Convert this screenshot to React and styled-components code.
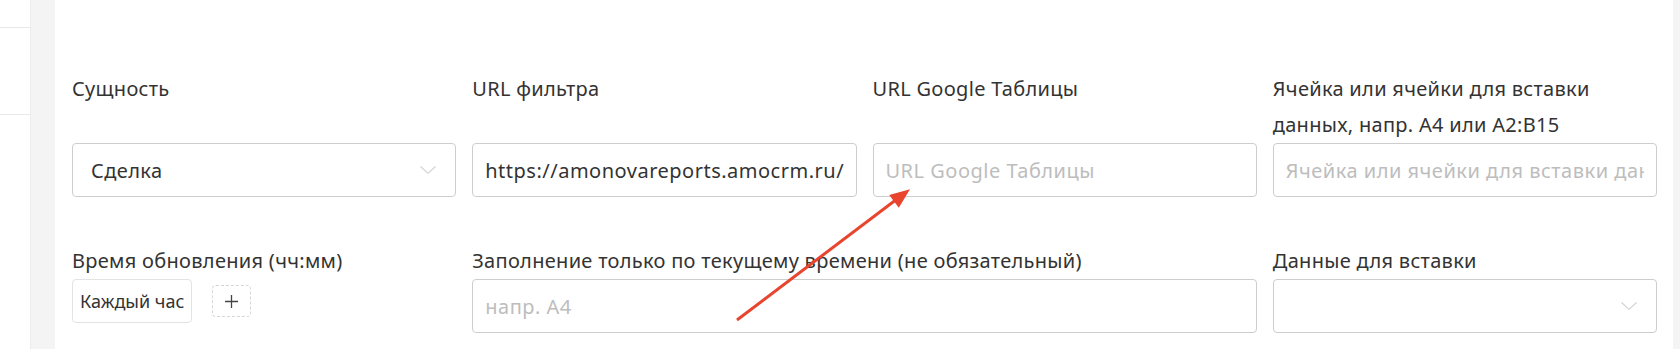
import React from "react";
import styled, { createGlobalStyle } from "styled-components";

const GlobalStyle = createGlobalStyle`
  html, body { margin: 0; padding: 0; background: #fff; }
  body { font-family: "Noto Sans", "Open Sans", sans-serif; color: #333; }
  * { box-sizing: border-box; }
`;

const Page = styled.div`
  position: relative;
  display: flex;
  height: 349px;
  overflow: hidden;
`;

const SidePanel = styled.div`
  width: 31px;
  flex: none;
  background: #fff;
  border-right: 1px solid #ececec;
  display: flex;
  flex-direction: column;
`;

const SideRow = styled.div`
  height: ${(p) => p.$h}px;
  border-bottom: 1px solid #e8e8e8;
`;

const Gutter = styled.div`
  width: ${(p) => p.$w}px;
  flex: none;
  background: #f4f4f4;
`;

const Main = styled.main`
  flex: 1;
  background: #fff;
  padding: 71px 16px 0 17px;
`;

const Grid = styled.div`
  display: grid;
  grid-template-columns: repeat(4, 1fr);
  column-gap: 16px;
  row-gap: 46px;
`;

const Field = styled.div`
  display: flex;
  flex-direction: column;
  grid-column: span ${(p) => p.$span || 1};
  min-width: 0;
`;

const Label = styled.label`
  flex: 1;
  font-size: 20px;
  letter-spacing: 0.3px;
  line-height: 36px;
  color: #333;
`;

const Input = styled.input`
  display: block;
  width: 100%;
  height: 54px;
  border: 1px solid #cdcdcd;
  border-radius: 4px;
  padding: 0 12px;
  font-family: inherit;
  font-size: 20px;
  letter-spacing: 0.5px;
  color: #333;
  background: #fff;
  outline: none;
  &::placeholder { color: #bdbdbd; }
`;

const Select = styled.div`
  display: flex;
  align-items: center;
  justify-content: space-between;
  height: 54px;
  border: 1px solid #cdcdcd;
  border-radius: 4px;
  padding: 0 19px 0 18px;
  font-size: 20px;
  letter-spacing: 0.4px;
  color: #333;
  background: #fff;
`;

const Chevron = () => (
  <svg width="16" height="8" viewBox="0 0 16 8" fill="none">
    <path d="M0.5 0.5 L8 7.3 L15.5 0.5" stroke="#d2d2d2" strokeWidth="1.1" />
  </svg>
);

const TagRow = styled.div`
  display: flex;
  align-items: center;
  gap: 20px;
  height: 54px;
  padding-bottom: 10px;
`;

const Tag = styled.div`
  display: flex;
  align-items: center;
  height: 44px;
  padding: 0 7px;
  border: 1px solid #e3e3e3;
  border-radius: 4px;
  font-size: 18px;
  color: #333;
  white-space: nowrap;
`;

const AddButton = styled.button`
  display: flex;
  align-items: center;
  justify-content: center;
  width: 39px;
  height: 32px;
  padding: 0;
  border: 1px dashed #d6d6d6;
  border-radius: 4px;
  background: #fff;
`;

const Overlay = styled.svg`
  position: absolute;
  inset: 0;
  pointer-events: none;
`;

export default function App() {
  return (
    <>
      <GlobalStyle />
      <Page>
        <SidePanel>
          <SideRow $h={28} />
          <SideRow $h={87} />
        </SidePanel>
        <Gutter $w={24} />
        <Main>
          <Grid>
            <Field>
              <Label>Сущность</Label>
              <Select>
                <span>Сделка</span>
                <Chevron />
              </Select>
            </Field>
            <Field>
              <Label>URL фильтра</Label>
              <Input readOnly value="https://amonovareports.amocrm.ru/leads/list/?filter" />
            </Field>
            <Field>
              <Label>URL Google Таблицы</Label>
              <Input readOnly placeholder="URL Google Таблицы" />
            </Field>
            <Field>
              <Label>Ячейка или ячейки для вставки данных, напр. A4 или A2:B15</Label>
              <Input readOnly placeholder="Ячейка или ячейки для вставки данных" />
            </Field>

            <Field>
              <Label>Время обновления (чч:мм)</Label>
              <TagRow>
                <Tag>Каждый час</Tag>
                <AddButton>
                  <svg width="13" height="13" viewBox="0 0 13 13">
                    <path d="M6.5 0 V13 M0 6.5 H13" stroke="#444" strokeWidth="1.3" />
                  </svg>
                </AddButton>
              </TagRow>
            </Field>
            <Field $span={2}>
              <Label>Заполнение только по текущему времени (не обязательный)</Label>
              <Input readOnly placeholder="напр. A4" />
            </Field>
            <Field>
              <Label>Данные для вставки</Label>
              <Select>
                <span />
                <Chevron />
              </Select>
            </Field>
          </Grid>
        </Main>
        <Gutter $w={7} />
        <Overlay width="1680" height="349" viewBox="0 0 1680 349">
          <line x1="737" y1="320" x2="895" y2="200.5" stroke="#e8442e" strokeWidth="3" />
          <polygon points="910,189.3 889.2,195 898.8,207.8" fill="#e8442e" />
        </Overlay>
      </Page>
    </>
  );
}
